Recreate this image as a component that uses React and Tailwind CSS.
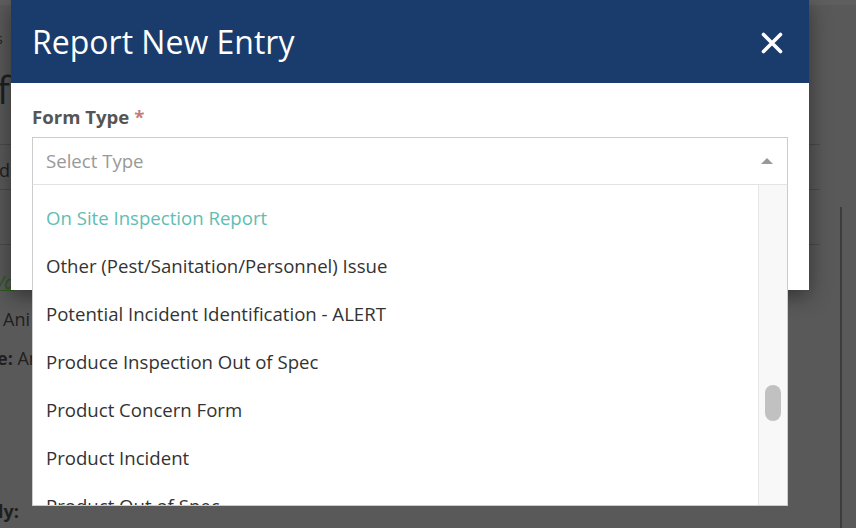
import { useState } from 'react'

const options = [
  'On Site Inspection Report',
  'Other (Pest/Sanitation/Personnel) Issue',
  'Potential Incident Identification - ALERT',
  'Produce Inspection Out of Spec',
  'Product Concern Form',
  'Product Incident',
  'Product Out of Spec',
]

function CloseIcon() {
  return (
    <svg width="22" height="22" viewBox="0 0 22 22" fill="none">
      <path d="M2.5 2.5 L19.5 19.5 M19.5 2.5 L2.5 19.5" stroke="white" strokeWidth="3.6" strokeLinecap="round" />
    </svg>
  )
}

function BackgroundPage() {
  return (
    <div className="flex h-full">
      <div className="w-[820px] shrink-0 flex flex-col text-[#1f1f1f]">
        <div className="h-[5px] bg-[#5e5e5e]" />
        <div className="mt-[24px] h-[20px] text-[14px] leading-[20px] -ml-[4px]">s</div>
        <div className="mt-[20px] h-[40px] text-[38px] leading-[40px] -ml-[3px]">fa</div>
        <div className="mt-[35px] h-px bg-[#4a4a4a]" />
        <div className="mt-[13px] h-[24px] text-[18px] leading-[24px] -ml-[1px]">d</div>
        <div className="mt-[7px] h-px bg-[#4a4a4a]" />
        <div className="mt-[54px] h-px bg-[#4a4a4a]" />
        <div className="mt-[25px] h-[24px] text-[18px] leading-[24px] -ml-[2px] italic text-[#2c5a1c] underline">/a</div>
        <div className="mt-[13px] h-[24px] text-[18px] leading-[24px] pl-[3px]">Ani</div>
        <div className="mt-[15px] h-[24px] text-[18px] leading-[24px] -ml-[3px]">
          <span className="font-bold">e:</span> An
        </div>
        <div className="mt-[129px] h-[24px] text-[18px] leading-[24px] -ml-[2px] font-bold">ly:</div>
      </div>
      <div className="flex-1 flex flex-col">
        <div className="h-[5px] bg-[#5e5e5e]" />
        <div className="flex-1 flex justify-end pr-[14px] pt-[202px]">
          <div className="w-[2px] bg-[#3c3c3c]" />
        </div>
      </div>
    </div>
  )
}

export default function App() {
  const [selected] = useState(null)

  return (
    <div className="relative w-[856px] h-[528px] overflow-hidden bg-[#595959] font-['Open_Sans','Noto_Sans',sans-serif]">
      <BackgroundPage />

      <div className="absolute left-[11px] top-0 w-[798px] h-[290px] bg-white shadow-[0_6px_20px_rgba(0,0,0,0.45)]">
        <div className="h-[83px] bg-[#1a3c6c] pl-[21px] pr-[26px] flex items-center justify-between">
          <h2 className="text-[32px] leading-[40px] text-white font-normal">Report New Entry</h2>
          <button className="mt-[3px]">
            <CloseIcon />
          </button>
        </div>

        <div className="px-[21px] pt-[22px]">
          <label className="block text-[18.6px] leading-[24px] font-bold text-[#555]">
            Form Type <span className="text-[#c47c7a]">*</span>
          </label>
          <div className="relative mt-[8px]">
            <div className="h-[48px] border border-[#cccccc] border-b-[#e3e3e3] flex items-center justify-between pl-[13px] pr-[14px]">
              <span className="text-[18.6px] text-[#999]">{selected || 'Select Type'}</span>
              <svg width="12" height="6" viewBox="0 0 12 6">
                <path d="M0 6 L6 0 L12 6 Z" fill="#999" />
              </svg>
            </div>

            <div className="absolute left-0 right-0 top-full h-[321px] bg-white border border-t-0 border-[#cccccc] flex">
              <ul className="flex-1 overflow-hidden pt-[9px]">
                {options.map((o, i) => (
                  <li
                    key={o}
                    className={`h-[48px] flex items-center pl-[13px] text-[18.6px] ${i === 0 ? 'text-[#5fbdb3]' : 'text-[#333]'}`}
                  >
                    {o}
                  </li>
                ))}
              </ul>
              <div className="w-[29px] bg-[#f8f8f8] border-l border-[#e6e6e6] pt-[200px] flex justify-center">
                <div className="w-[16px] h-[36px] rounded-full bg-[#c1c1c1]" />
              </div>
            </div>
          </div>
        </div>
      </div>
    </div>
  )
}
